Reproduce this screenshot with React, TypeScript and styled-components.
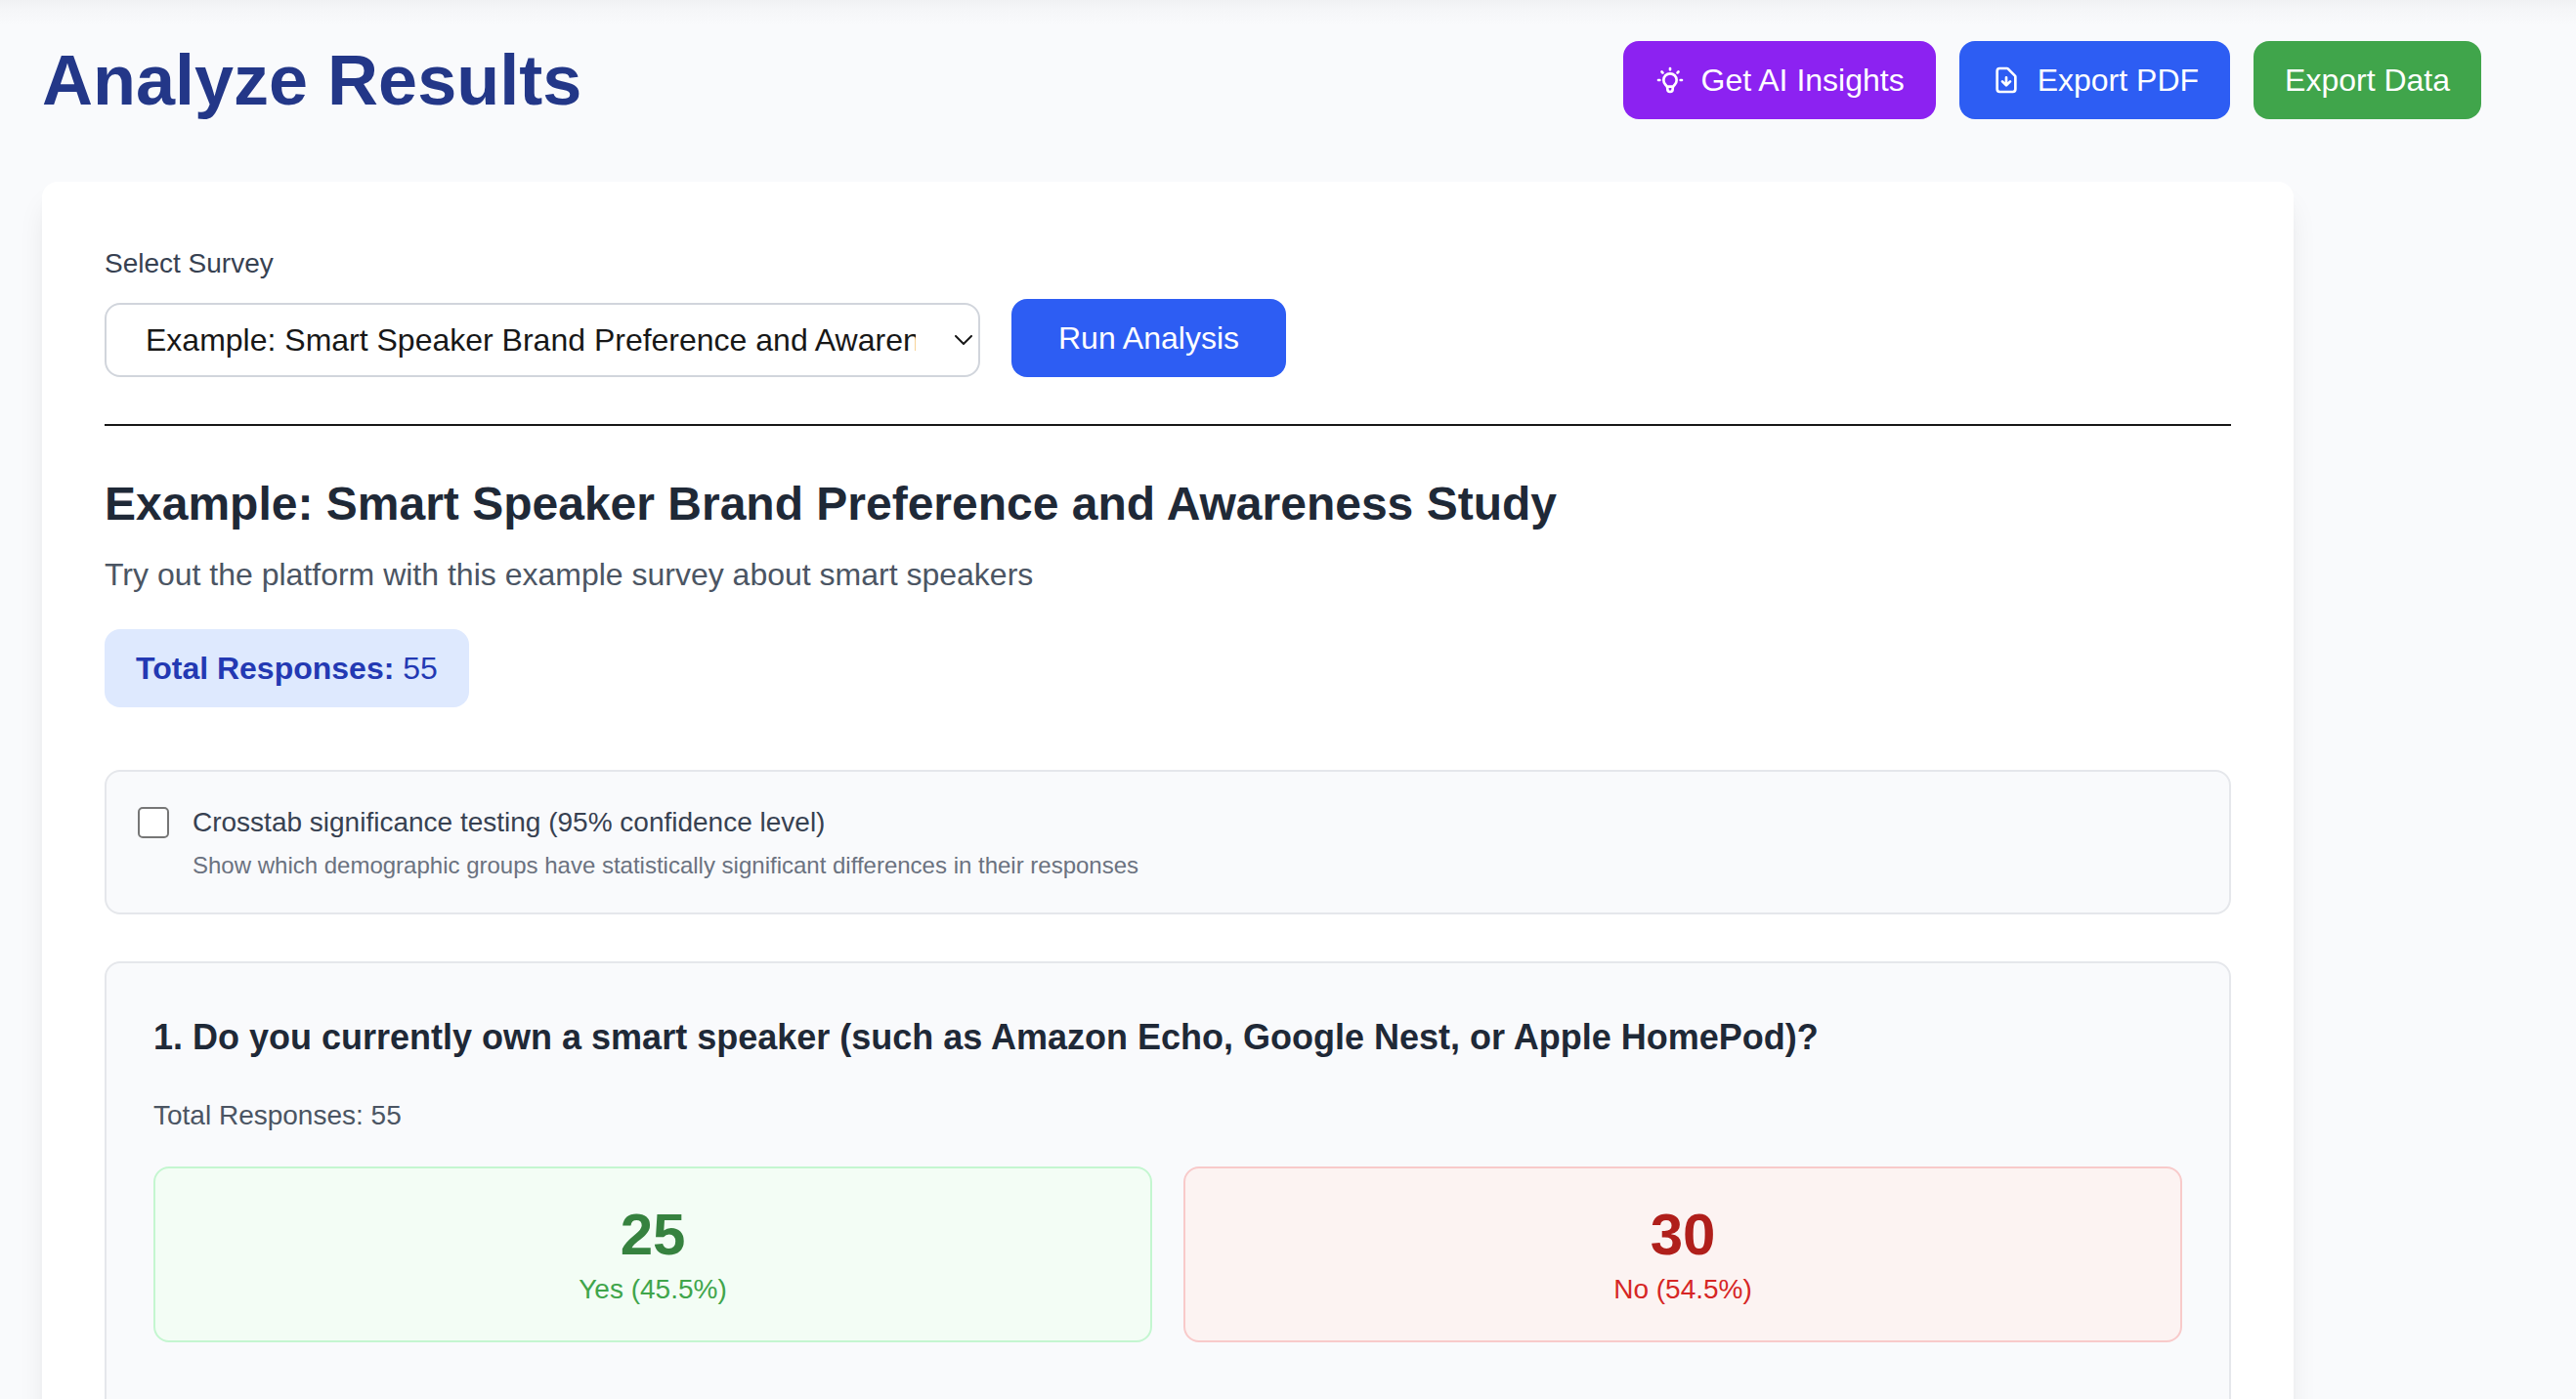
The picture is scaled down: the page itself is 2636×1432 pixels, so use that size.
import React, { useState } from "react";
import styled, { createGlobalStyle } from "styled-components";

const GlobalStyle = createGlobalStyle`
  *, *::before, *::after { box-sizing: border-box; }
  body {
    margin: 0;
    background: #f9fafc;
    color: #171717;
    font-family: "Liberation Sans", Arial, Helvetica, sans-serif;
    font-size: 32px;
    line-height: 48px;
  }
  h1, h2, h3, p { margin: 0; }
  button, select, input { font: inherit; }
`;

const Page = styled.div`
  min-height: 100vh;
  padding: 42px 97px 64px 43px;
  background: linear-gradient(to bottom, #f0f1f3 0, #f5f6f8 10px, #f9fafc 26px) no-repeat;
`;

const Content = styled.main`
  max-width: 2496px;
`;

const PageHeader = styled.header`
  display: flex;
  align-items: center;
  justify-content: space-between;
  gap: 24px;
  margin-bottom: 64px;
`;

const PageTitle = styled.h1`
  color: #233788;
  font-size: 72px;
  line-height: 80px;
  font-weight: 700;
`;

const Actions = styled.div`
  display: flex;
  gap: 24px;
`;

const tones = { purple: "#8c22f1", blue: "#2d5df3", green: "#40a54b" };

const Button = styled.button<{ $tone: keyof typeof tones; $wide?: boolean }>`
  display: inline-flex;
  align-items: center;
  gap: 16px;
  padding: 16px ${(p) => (p.$wide ? 48 : 32)}px;
  border: 0;
  border-radius: 16px;
  background: ${(p) => tones[p.$tone]};
  color: #fff;
  line-height: 48px;
  white-space: nowrap;
  cursor: pointer;
`;

const Icon = styled.svg`
  width: 32px;
  height: 32px;
  flex: none;
  fill: none;
  stroke: currentColor;
  stroke-width: 2;
  stroke-linecap: round;
  stroke-linejoin: round;
`;

const Card = styled.section`
  max-width: 2304px;
  padding: 64px;
  border-radius: 16px;
  background: #fff;
  box-shadow: 0 20px 30px -6px rgba(0, 0, 0, 0.1), 0 8px 12px -8px rgba(0, 0, 0, 0.1);
`;

const Picker = styled.form`
  display: flex;
  align-items: flex-end;
  gap: 32px;
  padding-bottom: 48px;
  border-bottom: 2px solid #171717;
`;

const Field = styled.div`
  display: flex;
  flex-direction: column;
  gap: 20px;
  flex: 0 1 896px;
  min-width: 0;
`;

const FieldLabel = styled.label`
  color: #374151;
  font-size: 28px;
  line-height: 40px;
`;

const SelectWrap = styled.div`
  display: grid;
  align-items: center;
  > * { grid-area: 1 / 1; }
`;

const Select = styled.select`
  appearance: none;
  width: 100%;
  height: 76px;
  padding: 0 64px 0 40px;
  border: 2px solid #d1d5dc;
  border-radius: 16px;
  background: #fff;
  color: #171717;
`;

const Chevron = styled.svg`
  justify-self: end;
  width: 18px;
  height: 10px;
  margin-right: 8px;
  fill: none;
  stroke: #171717;
  stroke-width: 2;
  stroke-linecap: round;
  pointer-events: none;
`;

const Summary = styled.div`
  display: flex;
  flex-direction: column;
  align-items: flex-start;
  margin: 48px 0 64px;
`;

const SurveyTitle = styled.h2`
  margin-bottom: 16px;
  color: #1f2937;
  font-size: 48px;
  line-height: 64px;
  font-weight: 700;
`;

const SurveyDescription = styled.p`
  margin-bottom: 32px;
  color: #4b5563;
`;

const ResponsesBadge = styled.p`
  padding: 16px 32px;
  border-radius: 16px;
  background: #dee9fe;
  color: #2339b3;
`;

const Panel = styled.section<{ $padding: number }>`
  margin-bottom: 48px;
  padding: ${(p) => p.$padding}px;
  border: 2px solid #e5e7eb;
  border-radius: 16px;
  background: #f9fafc;
`;

const OptionRow = styled.div`
  display: flex;
  align-items: flex-start;
  gap: 24px;
`;

const Checkbox = styled.input`
  appearance: none;
  flex: none;
  width: 32px;
  height: 32px;
  margin: 4px 0 0;
  border: 2px solid #767676;
  border-radius: 5px;
  background: #fff;
  &:checked {
    border-color: #2d5df3;
    background: #2d5df3;
    box-shadow: inset 0 0 0 6px #fff;
  }
`;

const OptionText = styled.div`
  display: flex;
  flex-direction: column;
  gap: 8px;
`;

const OptionHint = styled.p`
  color: #6b7280;
  font-size: 24px;
  line-height: 32px;
`;

const QuestionTitle = styled.h3`
  margin-bottom: 32px;
  color: #1f2937;
  font-size: 36px;
  line-height: 56px;
  font-weight: 700;
`;

const QuestionMeta = styled.p`
  margin-bottom: 32px;
  color: #4b5563;
  font-size: 28px;
  line-height: 40px;
`;

const StatGrid = styled.div`
  display: grid;
  grid-template-columns: 1fr 1fr;
  gap: 32px;
  margin-bottom: 32px;
`;

const statTones = {
  yes: { bg: "#f3fdf5", border: "#c4f6d0", value: "#36823f", label: "#40a54b" },
  no: { bg: "#fcf3f2", border: "#f8caca", value: "#b01f1b", label: "#d62625" },
};

const Stat = styled.div<{ $tone: keyof typeof statTones }>`
  padding: 32px;
  border: 2px solid ${(p) => statTones[p.$tone].border};
  border-radius: 16px;
  background: ${(p) => statTones[p.$tone].bg};
  text-align: center;
`;

const StatValue = styled.p<{ $tone: keyof typeof statTones }>`
  color: ${(p) => statTones[p.$tone].value};
  font-size: 60px;
  line-height: 72px;
  font-weight: 700;
`;

const StatLabel = styled.p<{ $tone: keyof typeof statTones }>`
  color: ${(p) => statTones[p.$tone].label};
  font-size: 28px;
  line-height: 40px;
`;

const survey = {
  title: "Example: Smart Speaker Brand Preference and Awareness Study",
  description: "Try out the platform with this example survey about smart speakers",
  responses: 55,
};

const answers: { tone: keyof typeof statTones; count: number; label: string }[] = [
  { tone: "yes", count: 25, label: "Yes (45.5%)" },
  { tone: "no", count: 30, label: "No (54.5%)" },
];

export default function App() {
  const [crosstab, setCrosstab] = useState(false);

  return (
    <>
      <GlobalStyle />
      <Page>
        <Content>
          <PageHeader>
            <PageTitle>Analyze Results</PageTitle>
            <Actions>
              <Button type="button" $tone="purple">
                <Icon viewBox="0 0 24 24" aria-hidden="true">
                  <path d="M9.663 17h4.673M12 3v1m6.364 1.636l-.707.707M21 12h-1M4 12H3m3.343-5.657l-.707-.707m2.828 9.9a5 5 0 117.072 0l-.548.547A3.374 3.374 0 0014 18.469V19a2 2 0 11-4 0v-.531c0-.895-.356-1.754-.988-2.386l-.548-.547z" />
                </Icon>
                Get AI Insights
              </Button>
              <Button type="button" $tone="blue">
                <Icon viewBox="0 0 24 24" aria-hidden="true">
                  <path d="M12 10v6m0 0l-3-3m3 3l3-3m2 8H7a2 2 0 01-2-2V5a2 2 0 012-2h5.586a1 1 0 01.707.293l5.414 5.414a1 1 0 01.293.707V19a2 2 0 01-2 2z" />
                </Icon>
                Export PDF
              </Button>
              <Button type="button" $tone="green">
                Export Data
              </Button>
            </Actions>
          </PageHeader>

          <Card>
            <Picker onSubmit={(e) => e.preventDefault()}>
              <Field>
                <FieldLabel htmlFor="survey">Select Survey</FieldLabel>
                <SelectWrap>
                  <Select id="survey">
                    <option>{survey.title}</option>
                  </Select>
                  <Chevron viewBox="0 0 18 10" aria-hidden="true">
                    <path d="M1 1l8 8 8-8" />
                  </Chevron>
                </SelectWrap>
              </Field>
              <Button type="submit" $tone="blue" $wide>
                Run Analysis
              </Button>
            </Picker>

            <Summary>
              <SurveyTitle>{survey.title}</SurveyTitle>
              <SurveyDescription>{survey.description}</SurveyDescription>
              <ResponsesBadge>
                <strong>Total Responses:</strong> {survey.responses}
              </ResponsesBadge>
            </Summary>

            <Panel $padding={32}>
              <OptionRow>
                <Checkbox
                  id="crosstab"
                  type="checkbox"
                  checked={crosstab}
                  onChange={(e) => setCrosstab(e.target.checked)}
                />
                <OptionText>
                  <FieldLabel htmlFor="crosstab">
                    Crosstab significance testing (95% confidence level)
                  </FieldLabel>
                  <OptionHint>
                    Show which demographic groups have statistically significant differences in their responses
                  </OptionHint>
                </OptionText>
              </OptionRow>
            </Panel>

            <Panel $padding={48}>
              <QuestionTitle>
                1. Do you currently own a smart speaker (such as Amazon Echo, Google Nest, or Apple HomePod)?
              </QuestionTitle>
              <QuestionMeta>Total Responses: {survey.responses}</QuestionMeta>
              <StatGrid>
                {answers.map((a) => (
                  <Stat key={a.tone} $tone={a.tone}>
                    <StatValue $tone={a.tone}>{a.count}</StatValue>
                    <StatLabel $tone={a.tone}>{a.label}</StatLabel>
                  </Stat>
                ))}
              </StatGrid>
            </Panel>
          </Card>
        </Content>
      </Page>
    </>
  );
}
